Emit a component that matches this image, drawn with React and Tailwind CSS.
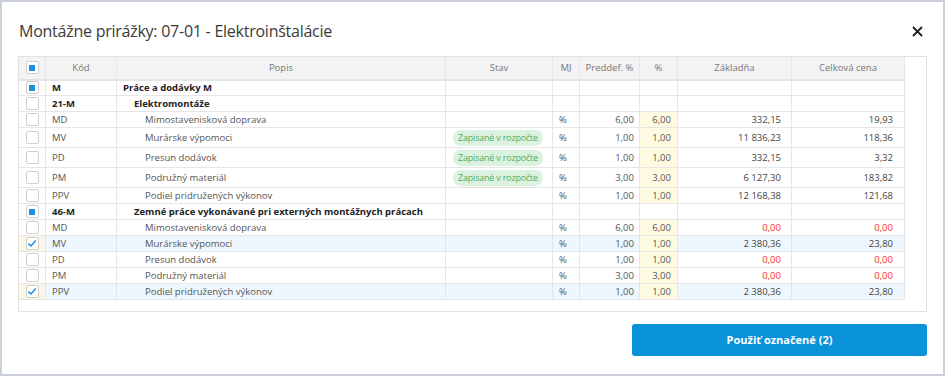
import React from 'react';

const rows = [
    { type: 'group', code: 'M', text: 'Práce a dodávky M', level: 0, check: 'partial' },
    { type: 'group', code: '21-M', text: 'Elektromontáže', level: 1, check: 'none' },
    { code: 'MD', text: 'Mimostavenisková doprava', pre: '6,00', pct: '6,00', base: '332,15', total: '19,93' },
    { code: 'MV', text: 'Murárske výpomoci', badge: true, pre: '1,00', pct: '1,00', base: '11 836,23', total: '118,36' },
    { code: 'PD', text: 'Presun dodávok', badge: true, pre: '1,00', pct: '1,00', base: '332,15', total: '3,32' },
    { code: 'PM', text: 'Podružný materiál', badge: true, pre: '3,00', pct: '3,00', base: '6 127,30', total: '183,82' },
    { code: 'PPV', text: 'Podiel pridružených výkonov', pre: '1,00', pct: '1,00', base: '12 168,38', total: '121,68' },
    { type: 'group', code: '46-M', text: 'Zemné práce vykonávané pri externých montážnych prácach', level: 1, check: 'partial' },
    { code: 'MD', text: 'Mimostavenisková doprava', pre: '6,00', pct: '6,00', base: '0,00', total: '0,00', zero: true },
    { code: 'MV', text: 'Murárske výpomoci', pre: '1,00', pct: '1,00', base: '2 380,36', total: '23,80', checked: true },
    { code: 'PD', text: 'Presun dodávok', pre: '1,00', pct: '1,00', base: '0,00', total: '0,00', zero: true },
    { code: 'PM', text: 'Podružný materiál', pre: '3,00', pct: '3,00', base: '0,00', total: '0,00', zero: true },
    { code: 'PPV', text: 'Podiel pridružených výkonov', pre: '1,00', pct: '1,00', base: '2 380,36', total: '23,80', checked: true },
];

function Checkbox({ state }) {
    return (
        <div className="mx-auto w-[13px] h-[13px] border border-[#cfcfcf] bg-white rounded-[2px] flex items-center justify-center">
            {state === 'partial' && <div className="w-[6px] h-[6px] bg-[#1d8fe1]" />}
            {state === 'checked' && (
                <svg width="10" height="9" viewBox="0 0 10 9">
                    <path d="M1.3 4.6 L3.9 7 L8.8 1.6" fill="none" stroke="#1d8fe1" strokeWidth="1.5" />
                </svg>
            )}
        </div>
    );
}

export default function App() {
    const td = 'border border-[#e6e6e6] p-0 leading-[13px] whitespace-nowrap';
    return (
        <div className="w-[945px] h-[376px] bg-white border-2 border-[#c9d0da] font-['Open_Sans',sans-serif] text-[#444] overflow-hidden">
            <div className="flex items-center justify-between pl-[17px] pr-[20px] h-[54px] pt-[4px]">
                <h2 className="text-[16px] text-[#3a3a3a] tracking-[-0.25px]">Montážne prirážky: 07-01 - Elektroinštalácie</h2>
                <svg width="11" height="11" viewBox="0 0 11 11">
                    <path d="M1 1 L10 10 M10 1 L1 10" stroke="#1f1f1f" strokeWidth="1.8" />
                </svg>
            </div>

            <div className="ml-[16px] w-[909px] h-[256px] border border-[#e2e2e2] overflow-hidden">
                <table className="table-fixed border-collapse w-[886px] text-[9.5px] -mt-px -ml-px">
                    <colgroup>
                        <col className="w-[27px]" />
                        <col className="w-[71px]" />
                        <col className="w-[329px]" />
                        <col className="w-[107px]" />
                        <col className="w-[27px]" />
                        <col className="w-[60px]" />
                        <col className="w-[38px]" />
                        <col className="w-[114px]" />
                        <col className="w-[113px]" />
                    </colgroup>
                    <thead>
                        <tr className="h-[23px] bg-[#f3f3f3] text-[#777] border-b-2 border-b-[#e4e4e4]">
                            <th className={`${td} font-normal`}><Checkbox state="partial" /></th>
                            <th className={`${td} font-normal`}>Kód</th>
                            <th className={`${td} font-normal`}>Popis</th>
                            <th className={`${td} font-normal`}>Stav</th>
                            <th className={`${td} font-normal`}>MJ</th>
                            <th className={`${td} font-normal`}>Preddef. %</th>
                            <th className={`${td} font-normal`}>%</th>
                            <th className={`${td} font-normal`}>Základňa</th>
                            <th className={`${td} font-normal`}>Celková cena</th>
                        </tr>
                    </thead>
                    <tbody>
                        {rows.map((r, i) => {
                            if (r.type === 'group') {
                                return (
                                    <tr key={i} className="h-[16px] font-bold text-[#222]">
                                        <td className={td}><Checkbox state={r.check} /></td>
                                        <td className={`${td} pl-[6px]`}>{r.code}</td>
                                        <td className={`${td} overflow-visible ${r.level === 0 ? 'pl-[6px]' : 'pl-[17px]'}`}>{r.text}</td>
                                        <td className={td}></td>
                                        <td className={td}></td>
                                        <td className={td}></td>
                                        <td className={td}></td>
                                        <td className={td}></td>
                                        <td className={td}></td>
                                    </tr>
                                );
                            }
                            const rowBg = r.checked ? 'bg-[#eef7fd]' : '';
                            const num = r.zero ? 'text-[#ff2d2d]' : 'text-[#444]';
                            return (
                                <tr key={i} className={`${r.badge ? 'h-[20px]' : 'h-[16px]'} ${rowBg} text-[#555]`}>
                                    <td className={`${td} ${r.checked ? 'bg-[#fdf5ea]' : ''}`}><Checkbox state={r.checked ? 'checked' : 'none'} /></td>
                                    <td className={`${td} pl-[6px]`}>{r.code}</td>
                                    <td className={`${td} pl-[28px]`}>{r.text}</td>
                                    <td className={`${td} pl-[7px]`}>
                                        {r.badge && (
                                            <span className="inline-block rounded-full bg-[#dcf2e0] text-[#4caf5f] px-[5px] leading-[16px] text-[9px] tracking-[-0.2px]">Zapisané v rozpočte</span>
                                        )}
                                    </td>
                                    <td className={`${td} pl-[6px]`}>%</td>
                                    <td className={`${td} text-right pr-[5px]`}>{r.pre}</td>
                                    <td className={`${td} text-right pr-[6px] bg-[#fffbe3]`}>{r.pct}</td>
                                    <td className={`${td} text-right pr-[10px] ${num}`}>{r.base}</td>
                                    <td className={`${td} text-right pr-[11px] ${num}`}>{r.total}</td>
                                </tr>
                            );
                        })}
                    </tbody>
                </table>
            </div>

            <div className="flex justify-end pr-[16px] pt-[12px]">
                <button className="w-[295px] h-[32px] rounded-[3px] bg-[#0b93da] text-white font-bold text-[11px]">Použiť označené (2)</button>
            </div>
        </div>
    );
}
